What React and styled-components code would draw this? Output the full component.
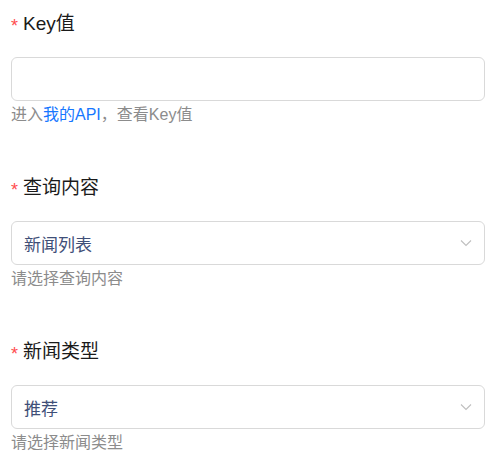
import React from 'react'
import styled, { createGlobalStyle } from 'styled-components'

const GlobalStyle = createGlobalStyle`
  html, body {
    margin: 0;
    padding: 0;
    background: #fff;
  }
  body {
    font-family: "Liberation Sans", "Noto Sans CJK SC", sans-serif;
  }
`

const fields = [
  { label: 'Key值', type: 'input' },
  { label: '查询内容', type: 'select', value: '新闻列表', help: '请选择查询内容' },
  { label: '新闻类型', type: 'select', value: '推荐', help: '请选择新闻类型' },
]

const Chevron = () => (
  <svg width="12" height="8" viewBox="0 0 12 8" fill="none">
    <polyline points="1,1.5 6,6.5 11,1.5" stroke="#bfbfbf" strokeWidth="1.1" />
  </svg>
)

const App = () => {
  return (
    <Form>
      <GlobalStyle />
      { fields.map( ( field ) => (
        <Field key={ field.label }>
          <Label><Star>*</Star>{ field.label }</Label>
          { field.type === 'input'
            ? <Input />
            : (
              <Select>
                <SelectValue>{ field.value }</SelectValue>
                <Chevron />
              </Select>
            )
          }
          { field.help
            ? <Help>{ field.help }</Help>
            : <Help>进入<Link>我的API</Link>，查看Key值</Help>
          }
        </Field>
      ) ) }
    </Form>
  )
}

export default App

const Form = styled.div`
  display: flex;
  flex-direction: column;
  gap: 49px;
  width: 474px;
  padding: 12px 0 0 11px;
`

const Field = styled.div`
  display: flex;
  flex-direction: column;
`

const Label = styled.div`
  display: flex;
  align-items: center;
  height: 24px;
  margin-bottom: 21px;
  font-size: 19px;
  line-height: 24px;
  color: #1a1a1a;
`

const Star = styled.span`
  color: #ff4d4f;
  font-size: 18px;
  margin-right: 5px;
  position: relative;
  top: 2px;
`

const Input = styled.div`
  box-sizing: border-box;
  height: 44px;
  border: 1px solid #d9d9d9;
  border-radius: 6px;
  background: #fff;
`

const Select = styled(Input)`
  display: flex;
  align-items: center;
  justify-content: space-between;
  padding: 0 12px 0 12px;
`

const SelectValue = styled.span`
  font-size: 17px;
  color: #3f4f78;
`

const Help = styled.div`
  margin-top: 2px;
  font-size: 16px;
  line-height: 24px;
  height: 24px;
  color: #8c8c8c;
`

const Link = styled.span`
  color: #1677ff;
`
